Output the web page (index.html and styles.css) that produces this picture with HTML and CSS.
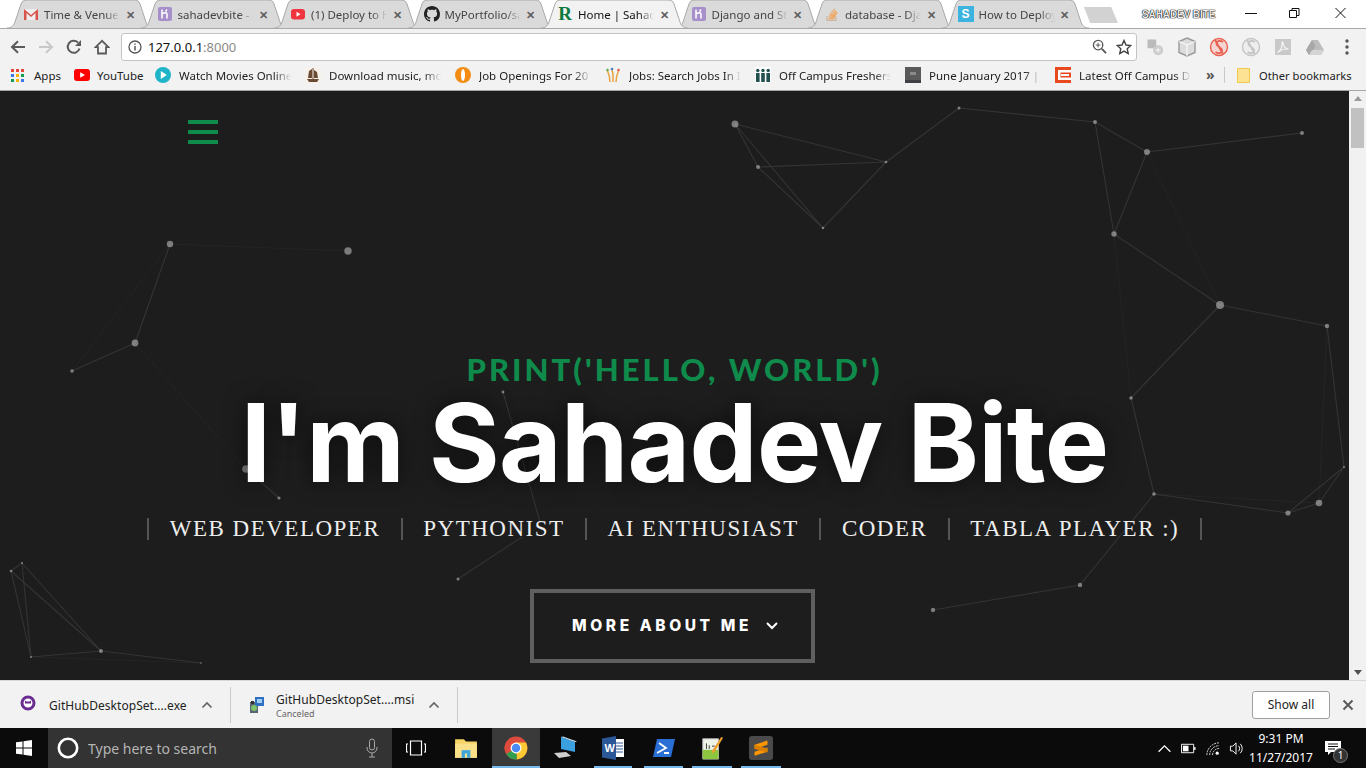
FILE: index.html
```html
<!DOCTYPE html>
<html lang="en">
<head>
<meta charset="utf-8">
<title>Home | Sahadev Bite</title>
<link rel="stylesheet" href="styles.css">
</head>
<body>
<div class="browser">
  <header class="titlebar">
    <div class="tabs">
      <div class="tab"><svg class="tab-bg" viewBox="0 0 147 28" preserveAspectRatio="none"><path d="M0 28C5 28 7 25 8 22L14 4C15 1 17 0 20 0H127C130 0 132 1 133 4L139 22C140 25 142 28 147 28"/></svg>
        <svg class="fav" viewBox="0 0 16 16"><path d="M1 3h14v11H1z" fill="#eee"/><path d="M1 14V3l7 6 7-6v11h-2.500V7L8 11 3.500 7v7z" fill="#d9534a"/></svg><span class="tab-title">Time &amp; Venue</span><span class="tab-x">✕</span></div>
      <div class="tab"><svg class="tab-bg" viewBox="0 0 147 28" preserveAspectRatio="none"><path d="M0 28C5 28 7 25 8 22L14 4C15 1 17 0 20 0H127C130 0 132 1 133 4L139 22C140 25 142 28 147 28"/></svg>
        <svg class="fav" viewBox="0 0 16 16"><rect x="1" y="1" width="14" height="14" rx="2" fill="#a78fcb"/><path d="M5 3.500v9M5 8c3-2 5-1.500 5 0v4.500M10 3.500l-1.500 2" fill="none" stroke="#fff" stroke-width="1.500"/></svg><span class="tab-title">sahadevbite - Heroku</span><span class="tab-x">✕</span></div>
      <div class="tab"><svg class="tab-bg" viewBox="0 0 147 28" preserveAspectRatio="none"><path d="M0 28C5 28 7 25 8 22L14 4C15 1 17 0 20 0H127C130 0 132 1 133 4L139 22C140 25 142 28 147 28"/></svg>
        <svg class="fav" viewBox="0 0 16 16"><rect x="1" y="3" width="14" height="10.500" rx="3" fill="#f0353e"/><path d="M6.500 5.800v5l4-2.500z" fill="#fff"/></svg><span class="tab-title">(1) Deploy to Heroku</span><span class="tab-x">✕</span></div>
      <div class="tab"><svg class="tab-bg" viewBox="0 0 147 28" preserveAspectRatio="none"><path d="M0 28C5 28 7 25 8 22L14 4C15 1 17 0 20 0H127C130 0 132 1 133 4L139 22C140 25 142 28 147 28"/></svg>
        <svg class="fav" viewBox="0 0 16 16"><path fill="#222" d="M8 0C3.580 0 0 3.580 0 8c0 3.540 2.290 6.530 5.470 7.590.4.070.55-.17.55-.38 0-.19-.01-.82-.01-1.490-2.010.37-2.530-.49-2.690-.94-.09-.23-.48-.94-.82-1.130-.28-.15-.68-.52-.01-.53.63-.01 1.080.58 1.230.82.72 1.210 1.870.87 2.330.66.07-.52.28-.87.51-1.070-1.780-.2-3.640-.89-3.640-3.950 0-.87.31-1.590.82-2.150-.08-.2-.36-1.020.08-2.120 0 0 .67-.21 2.200.82.64-.18 1.320-.27 2-.27.68 0 1.360.09 2 .27 1.530-1.040 2.200-.82 2.200-.82.44 1.100.16 1.920.08 2.120.51.56.82 1.270.82 2.150 0 3.070-1.870 3.750-3.650 3.950.29.25.54.73.54 1.480 0 1.070-.01 1.930-.01 2.200 0 .21.15.46.55.38A8.013 8.013 0 0016 8c0-4.420-3.580-8-8-8z"/></svg><span class="tab-title">MyPortfolio/sahadev</span><span class="tab-x">✕</span></div>
      <div class="tab tab-active"><svg class="tab-bg" viewBox="0 0 147 28" preserveAspectRatio="none"><path d="M0 28C5 28 7 25 8 22L14 4C15 1 17 0 20 0H127C130 0 132 1 133 4L139 22C140 25 142 28 147 28"/></svg>
        <span class="fav fav-r">R</span><span class="tab-title">Home | Sahadev Bite</span><span class="tab-x">✕</span></div>
      <div class="tab"><svg class="tab-bg" viewBox="0 0 147 28" preserveAspectRatio="none"><path d="M0 28C5 28 7 25 8 22L14 4C15 1 17 0 20 0H127C130 0 132 1 133 4L139 22C140 25 142 28 147 28"/></svg>
        <svg class="fav" viewBox="0 0 16 16"><rect x="1" y="1" width="14" height="14" rx="2" fill="#a78fcb"/><path d="M5 3.500v9M5 8c3-2 5-1.500 5 0v4.500M10 3.500l-1.500 2" fill="none" stroke="#fff" stroke-width="1.500"/></svg><span class="tab-title">Django and Static</span><span class="tab-x">✕</span></div>
      <div class="tab"><svg class="tab-bg" viewBox="0 0 147 28" preserveAspectRatio="none"><path d="M0 28C5 28 7 25 8 22L14 4C15 1 17 0 20 0H127C130 0 132 1 133 4L139 22C140 25 142 28 147 28"/></svg>
        <svg class="fav" viewBox="0 0 16 16"><path d="M3 10v4.500h9V10" fill="none" stroke="#c9b9a4" stroke-width="1.200"/><path d="M4.500 12.800h6M4.700 10.800l6 .5M5.300 8.800l5.800 1.500M6.300 6.800l5.300 2.700M7.800 4.800l4.700 3.600M9.800 3l3.500 4.700" fill="none" stroke="#f0a25a" stroke-width="1.200"/></svg><span class="tab-title">database - Django</span><span class="tab-x">✕</span></div>
      <div class="tab"><svg class="tab-bg" viewBox="0 0 147 28" preserveAspectRatio="none"><path d="M0 28C5 28 7 25 8 22L14 4C15 1 17 0 20 0H127C130 0 132 1 133 4L139 22C140 25 142 28 147 28"/></svg>
        <span class="fav fav-s">S</span><span class="tab-title">How to Deploy a Django</span><span class="tab-x">✕</span></div>
      <div class="newtab"></div>
    </div>
    <div class="profile">SAHADEV BITE</div>
    <div class="winctl">
      <svg viewBox="0 0 46 28"><path d="M17 13.500h12" stroke="#111" fill="none"/></svg>
      <svg viewBox="0 0 46 28"><path d="M15.500 10.500h7v7h-7zM18 10.500v-2h7v7h-2.500" stroke="#111" fill="none"/></svg>
      <svg viewBox="0 0 46 28"><path d="M15.500 8l10 10M25.500 8l-10 10" stroke="#111" fill="none"/></svg>
    </div>
  </header>

  <div class="toolbar">
    <button class="tb-btn"><svg viewBox="0 0 16 16"><path d="M15 8H2.500M8 2.200L2 8l6 5.800" fill="none" stroke="#5a5a5a" stroke-width="2"/></svg></button>
    <button class="tb-btn"><svg viewBox="0 0 16 16"><path d="M1 8h12.500M8 2.200L14 8l-6 5.800" fill="none" stroke="#c8c8c8" stroke-width="2"/></svg></button>
    <button class="tb-btn"><svg viewBox="0 0 16 16"><path d="M13.500 9.500A6 6 0 1 1 12 3.600" fill="none" stroke="#5a5a5a" stroke-width="2"/><path d="M15 1v6H9z" fill="#5a5a5a"/></svg></button>
    <button class="tb-btn"><svg viewBox="0 0 16 16"><path d="M8 1.800L1.500 8.200H4V14.500H12V8.200H14.500Z" fill="none" stroke="#5a5a5a" stroke-width="1.800" stroke-linejoin="miter"/></svg></button>
    <div class="omnibox">
      <svg class="omni-info" viewBox="0 0 14 14"><circle cx="7" cy="7" r="6" fill="none" stroke="#555" stroke-width="1.300"/><path d="M7 6v4.500M7 3.500v1.300" stroke="#555" stroke-width="1.500"/></svg>
      <span class="url">127.0.0.1<span class="url-port">:8000</span></span>
      <svg class="omni-zoom" viewBox="0 0 16 16"><circle cx="6.500" cy="6.500" r="5" fill="none" stroke="#555" stroke-width="1.400"/><path d="M10.500 10.500L15 15" stroke="#555" stroke-width="2"/><path d="M4 6.500h5M6.500 4v5" stroke="#555"/></svg>
      <svg class="omni-star" viewBox="0 0 16 16"><path d="M8 1.500l2 4.500 4.800.5-3.600 3.200 1 4.800L8 12.100l-4.200 2.400 1-4.800L1.200 6.500 6 6z" fill="none" stroke="#444" stroke-width="1.400"/></svg>
    </div>
    <div class="exts">
      <svg viewBox="0 0 16 16"><rect x="2" y="2" width="7" height="7" fill="#bbb"/><circle cx="10.500" cy="10.500" r="4" fill="#ccc"/><path d="M8.500 10.500h4M10.500 8.500v4" stroke="#f2f2f2"/></svg>
      <svg viewBox="0 0 20 20"><path d="M10 1l8 3.500v11L10 19l-8-3.500v-11z" fill="#dcdcdc" stroke="#999" stroke-width="1.400"/><path d="M2 4.500L10 8l8-3.500M10 8v11" fill="none" stroke="#fff"/></svg>
      <svg viewBox="0 0 20 20"><circle cx="10" cy="10" r="8.500" fill="#f7d6d2" stroke="#e8604f" stroke-width="1.400"/><path d="M14 5c-3-2-7-1-6.500 2s5 3 5.500 6-3.500 4-6.500 2M6 3l8 14" fill="none" stroke="#e8604f" stroke-width="1.800"/></svg>
      <svg viewBox="0 0 20 20"><circle cx="10" cy="10" r="8.500" fill="#eee" stroke="#c4c4c4" stroke-width="1.400"/><path d="M14 5c-3-2-7-1-6.500 2s5 3 5.500 6-3.500 4-6.500 2M6 3l8 14" fill="none" stroke="#c4c4c4" stroke-width="1.800"/></svg>
      <svg viewBox="0 0 20 20"><rect x="2" y="2" width="16" height="16" fill="#c9c9c9"/><path d="M4.500 15.500c3-2 5-6 4.500-10 0-1 1-1 1 0 0 4 2 6 5.500 6.500-4 0-8 1-11 3.500z" fill="none" stroke="#f2f2f2" stroke-width="1.200"/></svg>
      <svg viewBox="0 0 20 20"><path d="M7 3h6l6 10-3 5H4l-3-5z" fill="#bdbdbd"/><path d="M7 3l3.500 6L7 15l-3 3-3-5z" fill="#a8a8a8"/><path d="M7 13h12l-3 5H4z" fill="#d4d4d4"/></svg>
      <svg viewBox="0 0 20 20"><circle cx="10" cy="4" r="1.700" fill="#555"/><circle cx="10" cy="10" r="1.700" fill="#555"/><circle cx="10" cy="16" r="1.700" fill="#555"/></svg>
    </div>
  </div>

  <nav class="bookmarks">
    <div class="bm bm-apps"><svg class="bm-ico-apps" viewBox="0 0 13 13"><rect width="3" height="3" fill="#e8453c"/><rect x="5" width="3" height="3" fill="#e8453c"/><rect x="10" width="3" height="3" fill="#e8453c"/><rect y="5" width="3" height="3" fill="#3b78e7"/><rect x="5" y="5" width="3" height="3" fill="#f4b400"/><rect x="10" y="5" width="3" height="3" fill="#0f9d58"/><rect y="10" width="3" height="3" fill="#0f9d58"/><rect x="5" y="10" width="3" height="3" fill="#f4b400"/><rect x="10" y="10" width="3" height="3" fill="#3b78e7"/></svg><span class="bm-text bm-gap10">Apps</span></div>
    <div class="bm bm-yt"><svg class="bm-ico" viewBox="0 0 16 16"><rect y="2" width="16" height="12" rx="3" fill="#f00"/><path d="M6.200 5.200v5.600L11 8z" fill="#fff"/></svg><span class="bm-text">YouTube</span></div>
    <div class="bm bm-long"><svg class="bm-ico" viewBox="0 0 16 16"><circle cx="8" cy="8" r="8" fill="#1fb5c9"/><path d="M5.800 4v8l6-4z" fill="#fff"/></svg><span class="bm-text bm-fade">Watch Movies Online</span></div>
    <div class="bm bm-long"><svg class="bm-ico" viewBox="0 0 16 16"><rect width="16" height="16" fill="#f6f1ea"/><path d="M2 12h12l-2 3H4zM7.500 1h1v11h-1zM4 4l3-2v9H3zM9 3l3 2 1 6H9z" fill="#6b4a34"/></svg><span class="bm-text bm-fade">Download music, movies</span></div>
    <div class="bm bm-long"><svg class="bm-ico" viewBox="0 0 16 16"><circle cx="8" cy="8" r="8" fill="#f28c13"/><ellipse cx="8" cy="8" rx="2" ry="6" fill="#fff"/></svg><span class="bm-text bm-fade">Job Openings For 2017</span></div>
    <div class="bm bm-long"><svg class="bm-ico" viewBox="0 0 16 16"><path d="M8 15V7M5 15C5 10 4 7 2.500 4M11 15c0-5 1-8 2.500-11M8 7l-1-4" fill="none" stroke="#e9a33c" stroke-width="1.500"/><circle cx="2.500" cy="3" r="1.300" fill="#6aa84f"/><circle cx="13.500" cy="3" r="1.300" fill="#e25b4a"/><circle cx="7" cy="2" r="1.300" fill="#4a7fc1"/></svg><span class="bm-text bm-fade">Jobs: Search Jobs In India</span></div>
    <div class="bm bm-long"><svg class="bm-ico" viewBox="0 0 16 16"><rect width="16" height="16" fill="#fff"/><g fill="#21504f"><circle cx="2.800" cy="3.500" r="1.700"/><circle cx="8" cy="3.500" r="1.700"/><circle cx="13.200" cy="3.500" r="1.700"/><path d="M1 6h3.600v9H1zM6.200 6h3.600v9H6.200zM11.400 6H15v9h-3.600z"/></g></svg><span class="bm-text bm-fade">Off Campus Freshers Jobs</span></div>
    <div class="bm bm-long"><svg class="bm-ico" viewBox="0 0 16 16"><rect width="16" height="16" fill="#5a5a5a"/><rect x="5" y="5" width="6" height="3" fill="#8a8a8a"/><rect y="13" width="16" height="3" fill="#3f3f46"/></svg><span class="bm-text bm-fade">Pune January 2017 | Pune</span></div>
    <div class="bm bm-long"><svg class="bm-ico" viewBox="0 0 16 16"><rect width="16" height="16" fill="#e8491d"/><rect x="3" y="3" width="13" height="2.500" fill="#fff"/><rect x="6" y="7" width="8" height="2" fill="#fff"/><rect x="3" y="10.500" width="13" height="2.500" fill="#fff"/><rect x="3" y="3" width="2.500" height="10" fill="#fff"/></svg><span class="bm-text bm-fade">Latest Off Campus Drives</span></div>
    <span class="bm-more">»</span>
    <span class="bm-sep"></span>
    <div class="bm bm-other"><svg class="bm-ico-folder" viewBox="0 0 13 15"><path d="M.5.500h12v14H.5z" fill="#fde293" stroke="#f2c94c"/></svg><span class="bm-text">Other bookmarks</span></div>
  </nav>

  <div class="viewport">
    <main class="hero">
      <svg class="particles" viewBox="0 91 1349 589" aria-hidden="true">
        <g class="ln">
          <path d="M735 124L758 167M735 124L823 228M735 124L886 162M758 167L823 228M758 167L886 162M823 228L886 162M886 162L959 108M959 108L1095 122M1095 122L1147 152M1095 122L1114 234M1147 152L1302 133M1147 152L1114 234M1114 234L1220 305M1220 305L1131 398M1220 305L1327 326M1327 326L1344 467M1131 398L1154 494M1154 494L1080 585M1080 585L933 610M1154 494L1288 513M1344 467L1288 513M1344 467L1319 503M1319 503L1288 513"/>
          <path d="M170 244L135 343M135 343L72 371M246 469L279 498M458 579L522 537M503 392L540 522"/>
          <path d="M11 571L22 563M11 571L31 657M22 563L31 657M11 571L101 651M22 563L101 651M31 657L101 651M101 651L201 663"/>
        </g>
        <g class="ln-faint">
          <path d="M1147 152L1220 305M1114 234L1131 398M1154 494L1319 503M1327 326L1319 503"/>
          <path d="M170 244L348 251M170 244L72 371M135 343L246 469M31 657L201 663"/>
        </g>
        <g class="node">
          <circle cx="735" cy="124" r="3.500"/><circle cx="758" cy="167" r="2"/><circle cx="823" cy="228" r="1.300"/><circle cx="886" cy="162" r="1.300"/><circle cx="959" cy="108" r="1.500"/><circle cx="1095" cy="122" r="2"/><circle cx="1147" cy="152" r="3"/><circle cx="1302" cy="133" r="2"/><circle cx="1114" cy="234" r="2.700"/><circle cx="1220" cy="305" r="4"/><circle cx="1327" cy="326" r="2.200"/><circle cx="1131" cy="398" r="1.800"/><circle cx="1154" cy="494" r="1.800"/><circle cx="1080" cy="585" r="2.200"/><circle cx="933" cy="610" r="2.200"/><circle cx="1344" cy="467" r="1"/><circle cx="1319" cy="503" r="3.300"/><circle cx="1288" cy="513" r="2.600"/>
          <circle cx="170" cy="244" r="3.200"/><circle cx="348" cy="251" r="3.700"/><circle cx="135" cy="343" r="3.400"/><circle cx="72" cy="371" r="1.800"/><circle cx="246" cy="469" r="3.800"/><circle cx="279" cy="498" r="1.600"/><circle cx="503" cy="392" r="1.400"/><circle cx="458" cy="579" r="1.500"/>
          <circle cx="11" cy="571" r="1.300"/><circle cx="22" cy="563" r="1"/><circle cx="31" cy="657" r="1"/><circle cx="101" cy="651" r="2"/><circle cx="201" cy="663" r="0.800"/>
        </g>
      </svg>
      <button class="hamburger" aria-label="Menu"><span></span><span></span><span></span></button>
      <div class="intro">
        <h3 class="kicker">PRINT('HELLO, WORLD')</h3>
        <h1 class="headline">I'm Sahadev Bite</h1>
        <ul class="roles">
          <li>WEB DEVELOPER</li>
          <li>PYTHONIST</li>
          <li>AI ENTHUSIAST</li>
          <li>CODER</li>
          <li>TABLA PLAYER :)</li>
        </ul>
        <a class="more" href="#about">MORE ABOUT ME<svg viewBox="0 0 14 10"><path d="M2 2l5 5 5-5" fill="none" stroke="#fff" stroke-width="2"/></svg></a>
      </div>
    </main>
    <div class="scrollbar">
      <span class="sb-up"></span>
      <span class="sb-thumb"></span>
      <span class="sb-down"></span>
    </div>
  </div>

  <div class="downloads">
    <div class="dl dl-first">
      <svg class="dl-ico" viewBox="0 0 16 16"><circle cx="8" cy="8" r="6" fill="#fff" stroke="#6a2c91" stroke-width="3"/><path d="M5 8.500l0-3 1.500 1h3l1.500-1v3z" fill="#6a2c91"/></svg>
      <span class="dl-name">GitHubDesktopSet....exe</span>
      <svg class="dl-chev" viewBox="0 0 12 8"><path d="M1.500 6.500L6 2l4.500 4.500" fill="none" stroke="#666" stroke-width="1.700"/></svg>
    </div>
    <div class="dl dl-second">
      <svg class="dl-ico" viewBox="0 0 16 16"><rect x="1" y="5" width="8" height="11" fill="#5a6675"/><rect x="6" y="0" width="9" height="9" fill="#2f6fc4"/><rect x="8" y="2" width="5" height="4" fill="#9fd0ef"/><circle cx="5" cy="11" r="3" fill="#7fc36b"/><path d="M2 4h3v3H2z" fill="#333"/></svg>
      <div class="dl-stack"><span class="dl-name">GitHubDesktopSet....msi</span><span class="dl-status">Canceled</span></div>
      <svg class="dl-chev" viewBox="0 0 12 8"><path d="M1.500 6.500L6 2l4.500 4.500" fill="none" stroke="#666" stroke-width="1.700"/></svg>
    </div>
    <button class="show-all">Show all</button>
    <svg class="dl-close" viewBox="0 0 12 12"><path d="M1.500 1.500l9 9M10.500 1.500l-9 9" stroke="#5a5a5a" stroke-width="2"/></svg>
  </div>

  <footer class="taskbar">
    <div class="start"><svg viewBox="0 0 16 16"><path d="M0 2.300L6.500 1.400V7.500H0zM7.500 1.300L16 0v7.500H7.500zM0 8.500h6.500v6.100L0 13.700zM7.500 8.500H16V16l-8.500-1.200z" fill="#fff"/></svg></div>
    <div class="search">
      <svg class="cortana" viewBox="0 0 22 22"><circle cx="11" cy="11" r="9.200" fill="none" stroke="#fff" stroke-width="2.600"/></svg>
      <span class="search-text">Type here to search</span>
      <svg class="mic" viewBox="0 0 12 20"><rect x="3.500" y="1" width="5" height="11" rx="2.500" fill="none" stroke="#aaa"/><path d="M1 9v1a5 5 0 0 0 10 0V9M6 15v4M3 19h6" fill="none" stroke="#aaa"/></svg>
    </div>
    <div class="task task-view"><svg viewBox="0 0 20 16"><path d="M4.500 1h11v14h-11zM2 4H.5v8H2M18 4h1.500v8H18" fill="none" stroke="#fff" stroke-width="1.200"/></svg></div>
    <div class="task task-files"><svg viewBox="0 0 22 22"><path d="M1 3h8l2 2h10v15H1z" fill="#f6d365"/><path d="M1 7h20v13H1z" fill="#fbe08a"/><path d="M7 13h8v7H7z" fill="#3fa4dc"/><path d="M10 16h2v4h-2z" fill="#fbe08a"/></svg></div>
    <div class="task task-chrome on"><svg viewBox="0 0 22 22"><circle cx="11" cy="11" r="10.500" fill="#dd4b3e"/><path d="M11 11L2.300 16.500A10.500 10.500 0 0 1 2.500 4.800z" fill="#dd4b3e"/><path d="M11 11l-8.900 5.600A10.500 10.500 0 0 0 12 21.500z" fill="#2f9e4f"/><path d="M11 6h9.100a10.500 10.500 0 0 1-8.100 15.500z" fill="#fcc934"/><circle cx="11" cy="11" r="5" fill="#fff"/><circle cx="11" cy="11" r="3.900" fill="#4a8af4"/></svg></div>
    <div class="task task-pc"><svg viewBox="0 0 24 24"><path d="M8 1l14 5v10L8 13z" fill="#3aa0e0"/><path d="M8 1l2-.5 14 5-2 .5z" fill="#cfe8f7"/><path d="M1 17l12-1 5 4-12 2z" fill="#cfcfcf"/></svg></div>
    <div class="task task-word on"><svg viewBox="0 0 24 24"><path d="M14 3h9v18h-9z" fill="#fff"/><path d="M15 7h7M15 10h7M15 13h7M15 16h7" stroke="#2b5797"/><path d="M1 2.500L15 0v24L1 21.500z" fill="#2b5797"/><text class="word-w" x="3.500" y="16">W</text></svg></div>
    <div class="task task-ps on"><svg viewBox="0 0 24 24"><path d="M5 3h18l-4 18H1z" fill="#2a6fd6"/><path d="M7 7l7 5-9 5M12 17h5" fill="none" stroke="#fff" stroke-width="1.800"/></svg></div>
    <div class="task task-note on"><svg viewBox="0 0 24 26"><path d="M2 3h17v22H2z" fill="#eef3e8" stroke="#bbb"/><path d="M2 15h17v10H2z" fill="#8cc63f"/><path d="M6 8v6M9 10v4M12 11h3" stroke="#333"/><path d="M22 1l2 1-9 15-3 2 .5-3.500z" fill="#f0a030"/></svg></div>
    <div class="task task-sublime on"><svg viewBox="0 0 26 26"><rect width="26" height="26" rx="3" fill="#4a4a4a"/><path d="M6 9.500l14-4.500v4.500L6 14zM20 12.500v4.500l-14 4.500V17z" fill="#ff9800"/><path d="M6 9.500v4.500l14 4v-4.500z" fill="#d97f00"/></svg></div>
    <div class="tray">
      <svg class="tr-ico" viewBox="0 0 14 14"><path d="M1.500 10L7 4.500l5.500 5.500" fill="none" stroke="#fff" stroke-width="1.200"/></svg>
      <svg class="tr-ico" viewBox="0 0 16 14"><path d="M.5 2.500h13v9H.5z" fill="none" stroke="#fff"/><rect x="2" y="4" width="6" height="6" fill="#fff"/><rect x="14" y="5.500" width="1.500" height="3" fill="#fff"/></svg>
      <svg class="tr-ico" viewBox="0 0 16 16"><path d="M2 15a13 13 0 0 1 13-13M5 15A10 10 0 0 1 15 5M8 15a7 7 0 0 1 7-7" fill="none" stroke="#eee" stroke-dasharray="2 1"/><circle cx="13" cy="13" r="1.700" fill="#fff"/></svg>
      <svg class="tr-ico" viewBox="0 0 16 16"><path d="M1.500 5.500h2.500l3.500-3.500v12L4 10.500H1.500z" fill="none" stroke="#fff"/><path d="M10 5a4 4 0 0 1 0 6M12 3a7 7 0 0 1 0 10" fill="none" stroke="#fff"/></svg>
      <div class="clock"><span>9:31 PM</span><span>11/27/2017</span></div>
      <div class="notif"><svg viewBox="0 0 16 14"><path d="M0 0h16v11H6l-3 3v-3H0z" fill="#fff"/><path d="M3 3h10M3 5.500h10M3 8h7" stroke="#111"/></svg><span class="notif-badge">1</span></div>
    </div>
  </footer>
</div>
</body>
</html>
```

FILE: styles.css
```css
* { box-sizing: border-box; }
html, body { margin: 0; padding: 0; height: 100%; overflow: hidden; }
body { font-family: "Noto Sans", "Open Sans", sans-serif; font-size: 12px; color: #222; }
button { font: inherit; border: 0; background: none; padding: 0; }
svg { display: block; }

.browser { width: 1366px; height: 768px; display: flex; flex-direction: column; }

/* title bar */
.titlebar { height: 28px; flex: none; display: flex; background: #fff; position: relative; }
.tabs { display: flex; padding-left: 7px; width: 1135px; flex: none; align-items: stretch; }
.tab { position: relative; width: 147px; flex: none; margin-right: -13.5px; display: flex; align-items: center; padding-left: 16px; }
.tab-bg { position: absolute; inset: 0; width: 100%; height: 100%; }
.tab-bg path { fill: #dadada; stroke: #a9a9a9; stroke-width: 1; }
.tab-active { z-index: 2; }
.tab-active .tab-bg path { fill: #f2f2f2; }
.fav { position: relative; width: 16px; height: 16px; flex: none; margin-right: 5px; }
.fav-r { font: bold 19px/16px "Liberation Serif", serif; color: #0b7a3e; text-align: center; }
.fav-s { background: #3db4e0; color: #fff; font: bold 12px/16px "Liberation Sans", sans-serif; text-align: center; }
.tab-title { position: relative; width: 76px; flex: none; overflow: hidden; white-space: nowrap; color: #444; font-size: 11.5px; -webkit-mask-image: linear-gradient(90deg, #000 80%, transparent 100%); mask-image: linear-gradient(90deg, #000 80%, transparent 100%); }
.tab-active .tab-title { color: #111; }
.tab-x { position: relative; width: 12px; margin-left: 4px; text-align: center; font-size: 11px; font-weight: 700; color: #5f5f5f; }
.newtab { width: 34px; height: 16px; margin: 7px 0 0 9px; flex: none; background: #d2d2d2; clip-path: polygon(0 0, 80% 0, 100% 100%, 18% 100%); align-self: flex-start; position: relative; }
.profile { margin-left: 0; width: 90px; flex: none; padding-left: 7px; padding-top: 8px; font: bold 10px/13px "Liberation Sans", sans-serif; letter-spacing: -.1px; color: #eee; text-shadow: 0 0 1px #000, 0 0 1px #000, 0 0 1px #000; white-space: nowrap; }
.winctl { display: flex; margin-left: auto; }
.winctl svg { width: 46px; height: 28px; }

/* toolbar */
.toolbar { height: 34px; flex: none; background: #f2f2f2; border-top: 1px solid #a9a9a9; display: flex; align-items: center; padding: 2px 0 0 4px; position: relative; }
.tb-btn { width: 28px; height: 28px; display: flex; align-items: center; justify-content: center; }
.tb-btn svg { width: 16px; height: 16px; }
.omnibox { width: 1016px; height: 28px; margin-left: 5px; background: #fff; border: 1px solid #c4c4c4; border-radius: 3px; display: flex; align-items: center; padding-left: 6px; }
.omni-info { width: 14px; height: 14px; flex: none; }
.url { margin-left: 6px; font-size: 13px; color: #111; }
.url-port { color: #8a8a8a; }
.omni-zoom { width: 15px; height: 15px; margin-left: auto; }
.omni-star { width: 16px; height: 16px; margin: 0 4px 0 9px; }
.exts { display: flex; margin-left: 2px; }
.exts svg { width: 20px; height: 20px; margin: 0 6px; }

/* bookmarks */
.bookmarks { height: 29px; flex: none; background: #f2f2f2; border-bottom: 1px solid #a6a6a6; display: flex; align-items: center; padding: 0 0 2px 11px; }
.bm { display: flex; align-items: center; flex: none; }
.bm-apps { width: 63px; }
.bm-yt { width: 81px; }
.bm-long { width: 150px; }
.bm-ico-apps { width: 13px; height: 13px; flex: none; }
.bm-ico { width: 16px; height: 16px; flex: none; }
.bm-ico-folder { width: 13px; height: 15px; flex: none; margin-right: 9px; }
.bm-text { margin-left: 7px; white-space: nowrap; font-size: 11.500px; color: #222; }
.bm-gap10 { margin-left: 10px; }
.bm-fade { margin-left: 8px; width: 112px; overflow: hidden; -webkit-mask-image: linear-gradient(90deg, #000 85%, transparent 100%); mask-image: linear-gradient(90deg, #000 85%, transparent 100%); }
.bm-other .bm-text { margin-left: 0; font-size: 11.200px; }
.bm-more { margin-left: 1px; width: 18px; font-weight: 700; font-size: 14px; line-height: 14px; color: #555; }
.bm-sep { width: 1px; height: 16px; background: #c8c8c8; margin: 0 12px 0 0; }

/* page */
.viewport { height: 589px; flex: none; display: flex; }
.hero { position: relative; width: 1349px; flex: none; background: #1d1d1d; padding-top: 29px; overflow: hidden; }
.particles { position: absolute; inset: 0; width: 1349px; height: 589px; }
.ln path { fill: none; stroke: #fff; stroke-opacity: .1; stroke-width: 1.100; }
.ln-faint path { fill: none; stroke: #fff; stroke-opacity: .03; stroke-width: 1; }
.node circle { fill: #fff; fill-opacity: .42; }
.hamburger { position: relative; display: flex; flex-direction: column; gap: 6px; width: 30px; margin-left: 188px; }
.hamburger span { height: 4px; background: #0f8b4c; }
.intro { position: relative; display: flex; flex-direction: column; align-items: center; margin-top: 204px; }
.kicker { margin: 0 0 -6px; font: 900 31px/42px "Lato", sans-serif; letter-spacing: 3.050px; color: #0f8b4c; }
.headline { margin: 0; font: 700 108px/118px "Inter", sans-serif; letter-spacing: -.7px; color: #fff; text-shadow: 0 0 22px rgba(0,0,0,.6); white-space: nowrap; }
.roles { list-style: none; margin: 16px 0 0; padding: 0; display: flex; font: 400 23px/22px "Liberation Serif", serif; letter-spacing: 1.500px; color: #eee; }
.roles li { padding: 0 20.500px; border-left: 2px solid #555; white-space: nowrap; }
.roles li:last-child { border-right: 2px solid #555; }
.more { margin: 49px 4px 0 0; width: 285px; height: 74px; border: 4px solid #5f5f5f; display: flex; align-items: center; padding-left: 38px; font: 800 15.500px/20px "Inter", sans-serif; letter-spacing: 3.600px; color: #fff; text-decoration: none; }
.more svg { width: 14px; height: 10px; margin-left: 13px; }

/* scrollbar */
.scrollbar { width: 17px; flex: none; background: #f1f1f1; display: flex; flex-direction: column; align-items: center; padding: 0 2px; position: relative; }
.sb-up { width: 0; height: 0; margin-top: 5px; border: 4px solid transparent; border-top: 0; border-bottom: 5px solid #9a9a9a; }
.sb-thumb { width: 13px; height: 40px; margin-top: 7px; background: #c1c1c1; }
.sb-down { width: 0; height: 0; margin-top: auto; margin-bottom: 5px; border: 4px solid transparent; border-bottom: 0; border-top: 5px solid #505050; }

/* downloads */
.downloads { height: 48px; flex: none; background: #f2f2f2; border-top: 1px solid #d6d6d6; display: flex; align-items: center; }
.dl { height: 36px; display: flex; align-items: center; border-right: 1px solid #c9c9c9; flex: none; }
.dl-first { width: 231px; padding-left: 20px; }
.dl-second { width: 227px; padding-left: 18px; }
.dl-ico { width: 16px; height: 16px; flex: none; }
.dl-first .dl-ico { margin-right: 13px; margin-top: -3px; }
.dl-second .dl-ico { margin-right: 12px; }
.dl-name { font-size: 12px; color: #222; width: 138px; white-space: nowrap; letter-spacing: .05px; }
.dl-first .dl-name { margin-top: 2px; }
.dl-stack { display: flex; flex-direction: column; width: 139px; margin-top: 2px; margin-left: -1px; }
.dl-status { font-size: 9px; line-height: 12px; color: #666; }
.dl-chev { width: 12px; height: 8px; margin-left: 14px; flex: none; }
.dl-second .dl-chev { margin-left: 13px; }
.show-all { width: 78px; height: 28px; margin-left: auto; background: #fff; border: 1px solid #9f9f9f; border-radius: 3px; font-size: 12px; color: #222; }
.dl-close { width: 12px; height: 12px; margin: 0 12px 0 12px; }

/* taskbar */
.taskbar { height: 40px; flex: none; background: #0b0b0b; display: flex; align-items: stretch; }
.start { width: 48px; display: flex; align-items: center; justify-content: center; }
.start svg { width: 16px; height: 16px; }
.search { width: 344px; background: #333; display: flex; align-items: center; padding-left: 9px; }
.cortana { width: 22px; height: 22px; flex: none; }
.search-text { margin-left: 9px; font-size: 14px; color: #b5b5b5; }
.mic { width: 12px; height: 20px; margin-left: auto; margin-right: 14px; }
.task { display: flex; align-items: center; justify-content: center; flex: none; border-bottom: 2px solid transparent; padding-top: 1px; }
.task svg { width: 24px; height: 24px; }
.task.on { border-bottom-color: #76b9ed; }
.task-view { width: 48px; }
.task-view svg { width: 20px; height: 16px; }
.task-files { width: 52px; }
.task-chrome { width: 48px; background: #3a3a3a; }
.task-pc { width: 50px; }
.task-word { width: 38px; margin-left: 4px; }
.word-w { font: bold 11px "Liberation Sans", sans-serif; fill: #fff; }
.task-ps { width: 39px; margin-left: 12px; }
.task-note { width: 40px; margin-left: 9px; }
.task-sublime { width: 40px; margin-left: 9px; }
.tray { margin-left: auto; display: flex; align-items: center; color: #fff; }
.tr-ico { width: 15px; height: 15px; margin-right: 9px; flex: none; }
.clock { width: 72px; display: flex; flex-direction: column; align-items: center; font-size: 12px; line-height: 19px; margin-left: -8px; }
.notif { position: relative; width: 30px; display: flex; justify-content: center; margin-left: 1px; margin-right: 18px; }
.notif svg { width: 16px; height: 14px; }
.notif-badge { position: absolute; left: 15px; top: 7px; width: 15px; height: 15px; border-radius: 50%; background: #333; border: 1px solid #777; font-size: 10px; line-height: 13px; text-align: center; color: #fff; }
```
